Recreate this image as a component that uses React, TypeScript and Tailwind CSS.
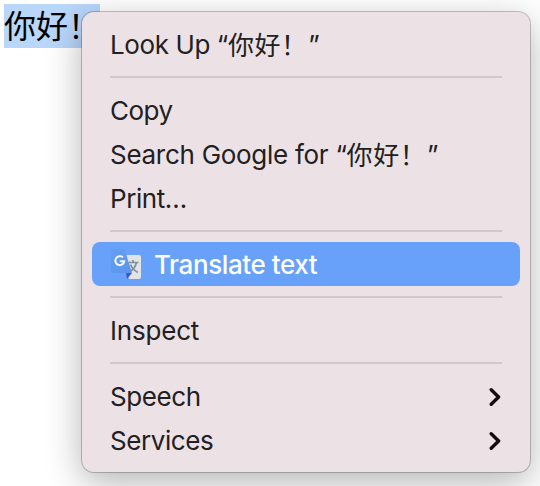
import type { ReactNode } from "react";

function Chinese() {
  return (
    <span className="relative -top-[1px] mr-[0.5px] font-['Noto_Sans_CJK_SC',sans-serif] text-[26px] font-normal tracking-[0.6px]">你好！</span>
  );
}

function Item({ children, submenu = false }: { children: ReactNode; submenu?: boolean }) {
  return (
    <div className="flex h-11 items-center justify-between pt-[2px] pr-[18px] pl-[18px]">
      <span className="flex h-11 items-center whitespace-pre leading-[44px]">{children}</span>
      {submenu && (
        <svg width="13" height="20" viewBox="0 0 13 20" fill="none">
          <path d="M2.2 2.7 L9.6 10 L2.2 17.3" stroke="#160b11" strokeWidth="3.4" strokeLinecap="round" strokeLinejoin="round" />
        </svg>
      )}
    </div>
  );
}

function Separator() {
  return <div className="mx-[18px] my-[10px] h-[2px] bg-[#d2c7cc]" />;
}

function TranslateIcon() {
  return (
    <svg width="32" height="32" viewBox="0 0 32 32" className="shrink-0">
      <defs>
        <linearGradient id="blue" x1="0" y1="0" x2="0.6" y2="1">
          <stop offset="0" stopColor="#659ff2" />
          <stop offset="1" stopColor="#5c96ee" />
        </linearGradient>
      </defs>
      <path d="M14 7 H29 Q31 7 31 9 V29 Q31 31 29 31 H19 Z" fill="#e1e3e6" />
      <path d="M16 25 H22 L17 31 Z" fill="#4656bb" />
      <path d="M3 1 H14.5 L22 25 H3 Q1 25 1 23 V3 Q1 1 3 1 Z" fill="url(#blue)" />
      <path
        d="M18.5 14.5 H28.5 M23 12 V14.5 M26.5 14.5 C25.5 18.5 23 21.5 20.7 23 M20.5 16.5 C21.8 20 24.5 22.5 27.8 24.5"
        stroke="#7c9299"
        strokeWidth="1.7"
        fill="none"
      />
      <path
        d="M13 9.4 A4.5 4.5 0 1 0 14.3 13.2 H9.8"
        stroke="#f4f8ff"
        strokeWidth="2"
        fill="none"
      />
    </svg>
  );
}

export default function App() {
  return (
    <main className="relative h-[486px] w-[540px] overflow-hidden bg-white font-['Inter','Noto_Sans_CJK_SC',sans-serif]">
      <div className="pt-1 pl-1">
        <div className="h-11 w-24 bg-[#b9d6fb] font-['Noto_Sans_CJK_SC',sans-serif] text-[32px] leading-[40px] whitespace-nowrap text-black">
          你好！
        </div>
      </div>
      <div className="absolute top-3 left-[82px] w-[448px] rounded-[12px] bg-[#ece2e6] py-[10px] text-[26px] text-[#222021] shadow-[0_0_0_1px_rgba(0,0,0,0.22),0_10px_36px_rgba(0,0,0,0.30)]">
        <div className="px-[10px]">
          <Item>
            <span className="tracking-[-0.4px]">Look Up “</span>
            <Chinese />
            <span>”</span>
          </Item>
          <Separator />
          <Item><span className="tracking-[-0.5px]">Copy</span></Item>
          <Item>
            <span className="tracking-[-0.28px]">Search Google for “</span>
            <Chinese />
            <span>”</span>
          </Item>
          <Item><span className="tracking-[-0.45px]">Print…</span></Item>
          <Separator />
          <div className="flex h-11 items-center rounded-[8px] bg-[#68a1f9] pl-[18px] text-white">
            <TranslateIcon />
            <span className="ml-3 font-medium tracking-[-0.42px]">Translate text</span>
          </div>
          <Separator />
          <Item><span className="tracking-[-0.2px]">Inspect</span></Item>
          <Separator />
          <Item submenu><span className="tracking-[-0.42px]">Speech</span></Item>
          <Item submenu><span className="tracking-[-0.42px]">Services</span></Item>
        </div>
      </div>
    </main>
  );
}
